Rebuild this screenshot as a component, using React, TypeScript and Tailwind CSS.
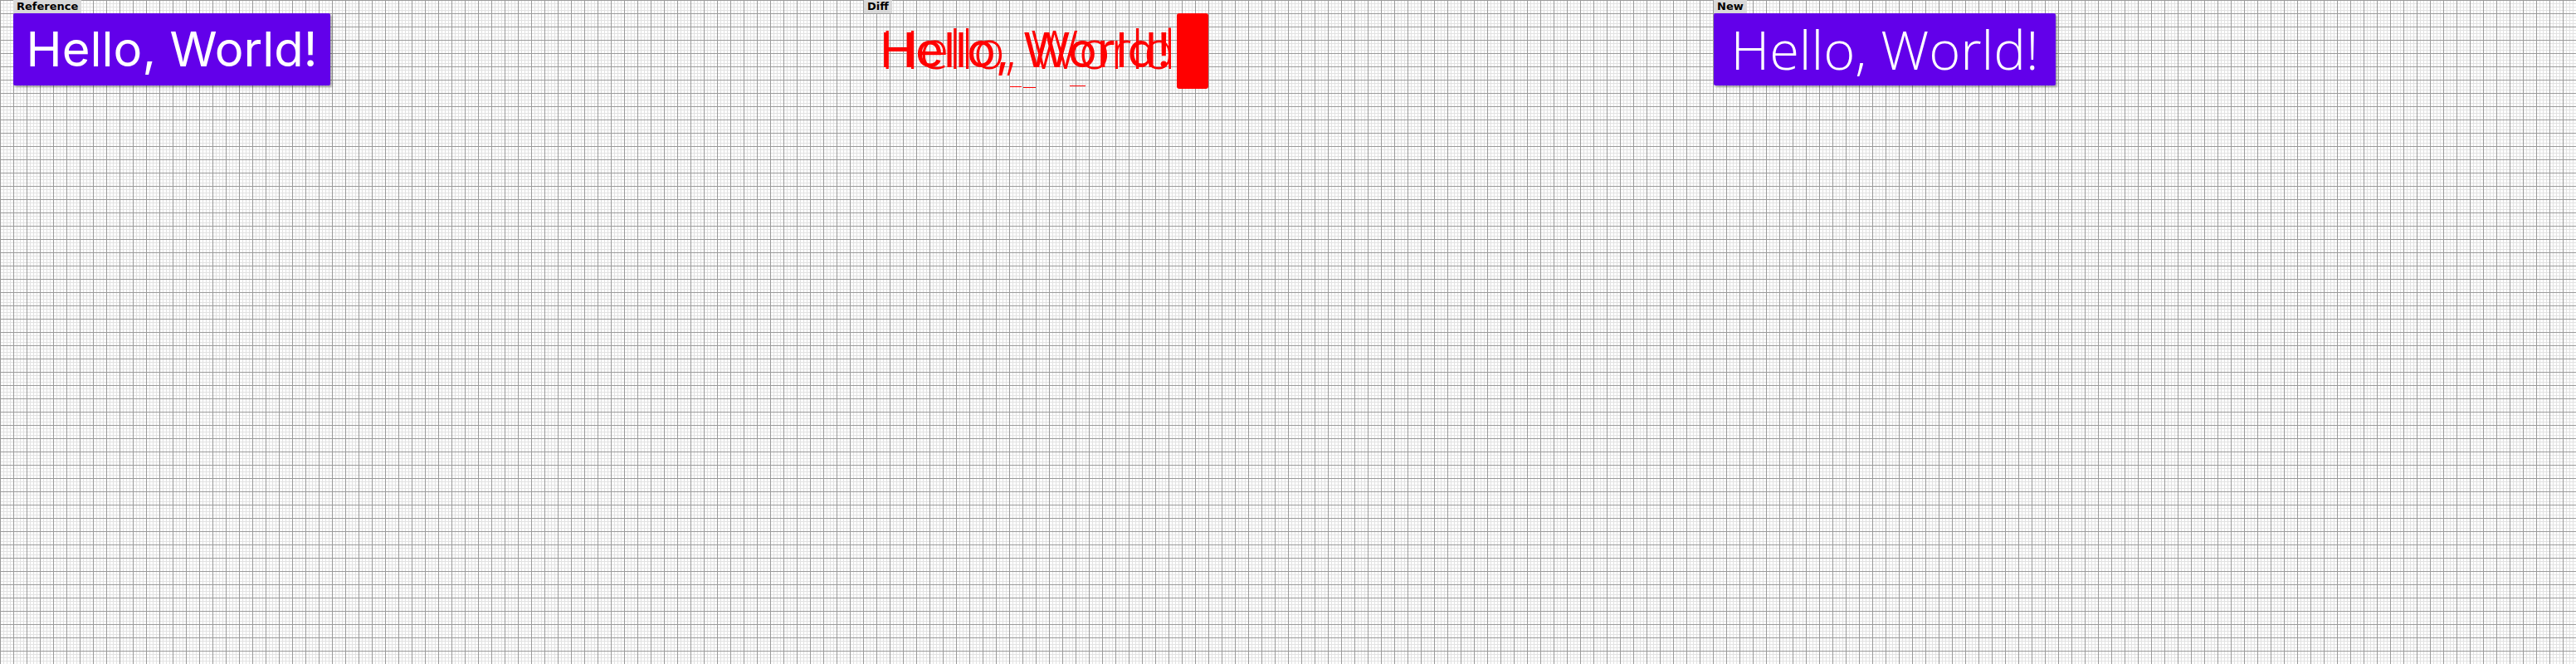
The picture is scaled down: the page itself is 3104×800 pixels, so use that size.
const grid =
  'bg-white bg-[linear-gradient(to_right,#9a9a9a_1px,transparent_1px),linear-gradient(to_bottom,#9a9a9a_1px,transparent_1px),linear-gradient(to_right,#e2e2e2_1px,transparent_1px),linear-gradient(to_bottom,#e2e2e2_1px,transparent_1px)] bg-[size:16px_16px,16px_16px,4px_4px,4px_4px]';

function Label({ text }: { text: string }) {
  return (
    <div className="ml-4 h-4 self-start bg-[#d9d9d9] px-1 text-[13px] leading-4 font-bold text-black font-['DejaVu_Sans',sans-serif]">
      {text}
    </div>
  );
}

export default function App() {
  return (
    <div className={`flex h-[800px] w-[3104px] overflow-hidden ${grid}`}>
      {/* Reference */}
      <div className="flex w-[1025px] flex-col">
        <Label text="Reference" />
        <div className="ml-4 flex h-[87px] w-[382px] items-center justify-center rounded-[2px] bg-[#6200ea] text-[58px] text-white shadow-[2px_2px_3px_rgba(0,0,0,0.35)] font-['Inter',sans-serif]">
          Hello, World!
        </div>
      </div>

      {/* Diff */}
      <div className="flex w-[1024px] flex-col">
        <Label text="Diff" />
        <div className="relative ml-4 h-[92px] w-[440px]">
          <span className="absolute top-[12px] left-[19px] text-[58px] leading-[64px] text-[#ff0000] font-['Inter',sans-serif]">
            Hello, World!
          </span>
          <span className="absolute top-[6px] left-[20px] text-[65px] leading-[72px] font-light text-[#ff0000] font-['Open_Sans',sans-serif]">
            Hello, World!
          </span>
          <div className="absolute top-0 left-[377px] h-[91px] w-[38px] rounded-[3px] bg-[#ff0000]" />
          <div className="absolute top-[88px] left-[176px] h-px w-[14px] bg-[#ff0000]" />
          <div className="absolute top-[89px] left-[192px] h-px w-[15px] bg-[#ff0000]" />
          <div className="absolute top-[87px] left-[248px] h-px w-[19px] bg-[#ff0000]" />
        </div>
      </div>

      {/* New */}
      <div className="flex flex-1 flex-col">
        <Label text="New" />
        <div className="ml-4 flex h-[87px] w-[412px] items-center justify-center rounded-[2px] bg-[#6200ea] text-[65px] font-light text-white shadow-[2px_2px_3px_rgba(0,0,0,0.35)] font-['Open_Sans',sans-serif]">
          Hello, World!
        </div>
      </div>
    </div>
  );
}
